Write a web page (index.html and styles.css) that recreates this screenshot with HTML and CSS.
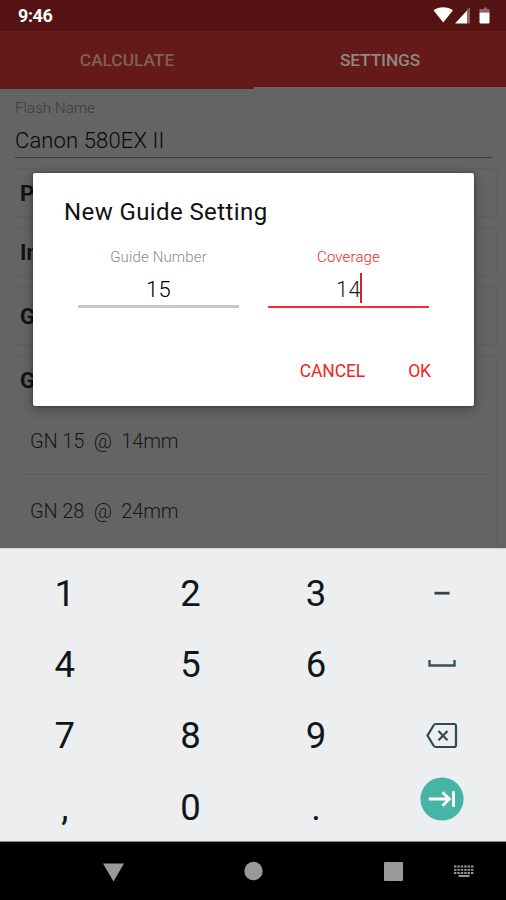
FILE: index.html
```html
<!DOCTYPE html>
<html lang="en">
<head>
<meta charset="utf-8">
<title>Flash Settings</title>
<link rel="stylesheet" href="styles.css">
</head>
<body>
<div class="phone">
  <header class="status">
    <span class="clock">9:46</span>
    <svg class="status-icons" width="60" height="20" viewBox="0 0 60 20">
      <path d="M0.500 4.200C6 .2 14.500.2 20 4.200L10.200 16.500Z" fill="#fff"/>
      <path d="M34 3V17.500H37V2Z" fill="#8f6464"/>
      <path d="M22 17.500H34V4.500Z" fill="#fff"/>
      <path d="M48.500 3H51V1.500H54V3H56.500V6.500H46.500V3Z" fill="#8f6464"/>
      <path d="M46.500 6.500H56.500V16.500Q56.500 17.500 55.500 17.500H47.500Q46.500 17.500 46.500 16.500Z" fill="#fff"/>
    </svg>
  </header>
  <nav class="tabs">
    <div class="tab">CALCULATE</div>
    <div class="tab active">SETTINGS</div>
  </nav>
  <main class="content">
    <div class="field-label">Flash Name</div>
    <div class="field-value">Canon 580EX II</div>
    <section class="card c1"><b>P</b></section>
    <section class="card c2"><b>In</b></section>
    <section class="card c3"><b>G</b></section>
    <section class="card c4">
      <b>G</b>
      <div class="row first">GN 15&nbsp; @&nbsp; 14mm</div>
      <div class="row">GN 28&nbsp; @&nbsp; 24mm</div>
    </section>
    <div class="dialog">
      <h1>New Guide Setting</h1>
      <div class="inputs">
        <div class="input">
          <label>Guide Number</label>
          <div class="value">15</div>
        </div>
        <div class="input focus">
          <label>Coverage</label>
          <div class="value"><span>14</span><i class="caret"></i></div>
        </div>
      </div>
      <div class="actions"><span class="cancel">CANCEL</span><span class="ok">OK</span></div>
    </div>
  </main>
  <div class="keyboard">
    <div class="key">1</div><div class="key">2</div><div class="key">3</div>
    <div class="key"><svg width="34" height="30" viewBox="0 0 34 30"><path d="M9.500 14.200H24.500" stroke="#3c4347" stroke-width="2.800"/></svg></div>
    <div class="key">4</div><div class="key">5</div><div class="key">6</div>
    <div class="key"><svg width="34" height="30" viewBox="0 0 34 30"><path d="M4.500 10V15.500H29.500V10" fill="none" stroke="#36535c" stroke-width="2.400"/></svg></div>
    <div class="key">7</div><div class="key">8</div><div class="key">9</div>
    <div class="key"><svg width="34" height="30" viewBox="0 0 34 30"><path d="M11 3H29Q31 3 31 5V24Q31 26 29 26H11Q9.500 26 8.500 24.500L2.500 14.500L8.500 4.500Q9.500 3 11 3ZM13.500 10L22.500 19.200M22.500 10L13.500 19.200" fill="none" stroke="#2f4a55" stroke-width="2.200"/></svg></div>
    <div class="key">,</div><div class="key">0</div><div class="key">.</div>
    <div class="key next"><svg width="44" height="44" viewBox="0 0 44 44"><circle cx="22" cy="22" r="21.600" fill="#46b5a5"/><path d="M8.700 22H29M22.500 15.200L29.300 22L22.500 28.800M33.500 14.300V29.700" fill="none" stroke="#fff" stroke-width="2.900"/></svg></div>
  </div>
  <footer class="navbar">
    <svg width="506" height="58" viewBox="0 0 506 58">
      <g fill="#999">
        <path d="M103 21.500H124L113.500 39.500Z"/>
        <circle cx="253.500" cy="29" r="9.200"/>
        <rect x="384" y="20" width="19" height="19" rx="1"/>
      </g>
      <path d="M454 24.500H474M454 27.800H474M454 31H474" stroke="#999" stroke-width="1.800" stroke-dasharray="2.400 1"/>
      <path d="M458.500 34H469.500" stroke="#999" stroke-width="2"/>
    </svg>
  </footer>
</div>
</body>
</html>
```
FILE: styles.css
```css
* { box-sizing: border-box; }
body { margin: 0; font-family: Roboto, "Liberation Sans", sans-serif; background: #000; }
.phone { width: 506px; height: 900px; display: flex; flex-direction: column; overflow: hidden; }
.status { height: 31px; flex: none; background: #541212; display: flex; justify-content: space-between; align-items: center; padding: 0 13px 0 18px; color: #fff; }
.clock { font-size: 18px; font-weight: 700; line-height: 30px; letter-spacing: -.4px; }
.tabs { height: 58px; flex: none; display: flex; background: #641a16; border-bottom: 1px solid #601e1b; }
.tab { width: 254px; display: flex; align-items: center; justify-content: center; font-size: 17.300px; font-weight: 500; color: #836059; padding-top: 0; }
.tab.active { width: 252px; color: #918684; border-bottom: 2px solid #686868; margin-bottom: -1px; padding-top: 2px; letter-spacing: -.1px; }
.content { height: 459px; flex: none; background: #646464; padding: 10px 12px 0; position: relative; overflow: hidden; }
.field-label { height: 18px; line-height: 18px; margin-left: 3px; font-size: 15px; font-weight: 300; color: #3a3a3a; letter-spacing: .1px; }
.field-value { height: 41px; line-height: 48px; margin: 0 2px 0 3px; font-size: 22px; font-weight: 300; color: #080808; border-bottom: 1.500px solid #3c3c3c; letter-spacing: .13px; }
.card { border: 1px solid #5e5e5e; border-radius: 4px; padding-left: 9px; margin: 0 -3px 10px -2px; color: #141414; font-size: 22px; }
.card b { font-weight: 700; }
.c1 { height: 49px; line-height: 49px; margin-top: 10px; }
.c2 { height: 49px; line-height: 49px; }
.c3 { height: 59px; line-height: 59px; }
.c4 { height: 200px; border-bottom: 0; line-height: 49px; }
.c4 b { display: block; height: 49px; }
.row { height: 70px; line-height: 72px; margin: 0 7px 0 0; padding-left: 10px; font-size: 20px; font-weight: 300; color: #181818; letter-spacing: -.14px; }
.row.first { border-bottom: 1px solid #5a5a5a; }
.dialog { position: absolute; left: 33px; top: 84px; width: 441px; height: 233px; background: #fff; border-radius: 2px; box-shadow: 0 3px 12px rgba(0,0,0,.32), 0 0 3px rgba(0,0,0,.4); padding: 22px 44px 0 45px; }
.dialog h1 { margin: 0 0 0 -14px; font-size: 24px; font-weight: 400; line-height: 34px; height: 50px; color: #111; letter-spacing: .4px; }
.inputs { display: flex; gap: 29px; }
.input { width: 161px; text-align: center; }
.input label { display: block; height: 24px; line-height: 24px; font-size: 15px; font-weight: 300; color: #8a8a8a; letter-spacing: .15px; }
.value { height: 39px; line-height: 43px; font-size: 22px; font-weight: 300; border-bottom: 3px solid #c8c8c8; color: #000; display: flex; justify-content: center; align-items: center; padding-top: 4px; letter-spacing: .3px; }
.focus label { color: #f02820; }
.focus .value { border-bottom: 2px solid #ee3427; color: #222; padding-top: 0; }
.focus .value span { padding: 3px 0 0 1px; }
.caret { width: 2px; height: 30px; background: #d8202a; margin-left: -1px; }
.actions { margin-top: 47px; display: flex; justify-content: flex-end; gap: 43px; color: #ef261b; font-size: 17.500px; line-height: 33px; font-weight: 400; margin-right: -1px; letter-spacing: -.1px; }
.keyboard { height: 294px; flex: none; background: #eceef0; border-top: 1px solid #cfd1d3; border-bottom: 1px solid #888; padding: 9px 2px 0; display: grid; grid-template-columns: repeat(4, 125.600px); grid-template-rows: repeat(4, 71.200px); }
.key { display: flex; align-items: center; justify-content: center; font-size: 36.500px; font-weight: 400; color: #10171a; }
.next { padding-bottom: 17px; }
.navbar { height: 58px; background: #000; }
.navbar svg { display: block; }
```
